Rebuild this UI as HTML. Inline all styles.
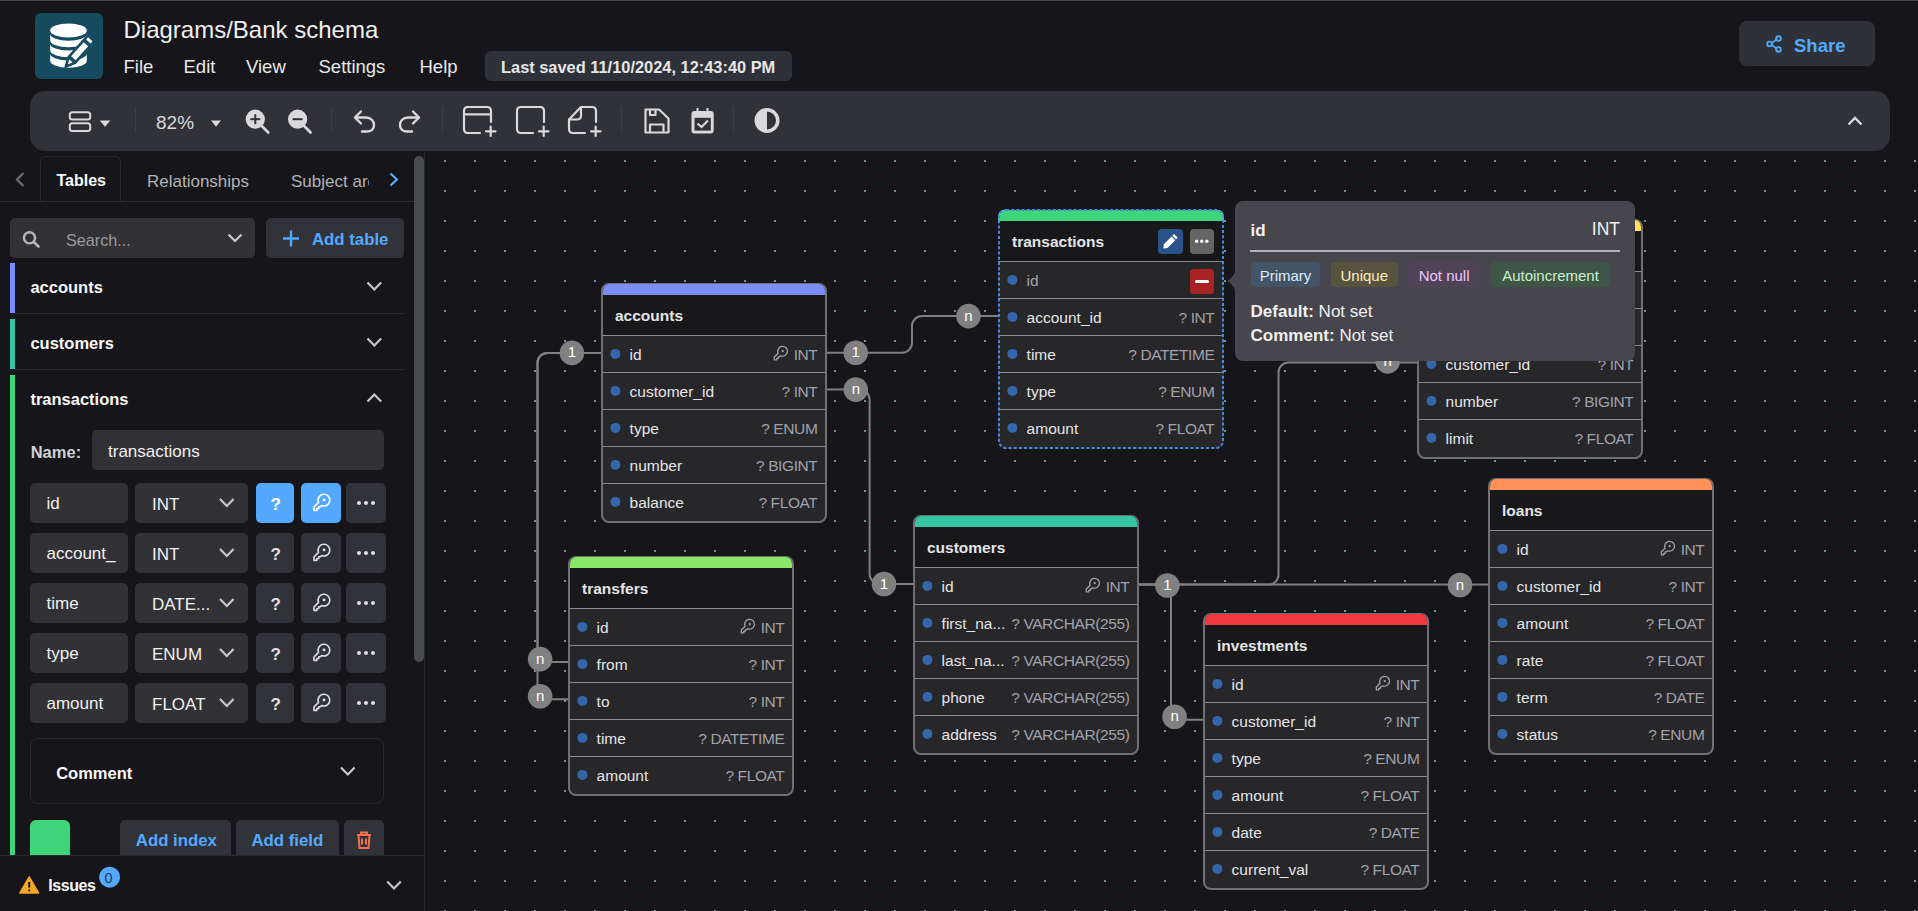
<!DOCTYPE html><html><head><meta charset='utf-8'><style>
*{box-sizing:border-box}
html,body{margin:0;padding:0}
body{width:1918px;height:911px;overflow:hidden;background:#16161a;font-family:"Liberation Sans",sans-serif;position:relative;color:#f9f9f9}
.a{position:absolute}
.t{position:absolute;white-space:nowrap;line-height:1}
svg{display:block}
</style></head><body>
<div class="a" style="left:0px;top:0px;width:1918px;height:1px;background:#4b4b51;border-radius:0px;"></div>
<div class="a" style="left:35px;top:13px;width:68px;height:66px;border-radius:6px;background:#164b60">
<svg width="68" height="66" viewBox="0 0 68 66">
<g fill="#fff">
<ellipse cx="33.5" cy="17.5" rx="18.3" ry="6.9"/>
<path d="M15.2 20.8 A18.3 6.9 0 0 0 51.8 20.8 L51.8 27.4 A18.3 6.9 0 0 1 15.2 27.4 Z"/>
<path d="M15.2 30.7 A18.3 6.9 0 0 0 51.8 30.7 L51.8 37.3 A18.3 6.9 0 0 1 15.2 37.3 Z"/>
<path d="M15.2 40.6 A18.3 6.9 0 0 0 51.8 40.6 L51.8 47.8 A18.3 6.9 0 0 1 15.2 47.8 Z"/>
</g>
<g transform="translate(43.5,39.5) rotate(41.8)" stroke="#164b60" stroke-width="2.6" stroke-linejoin="round">
<rect x="-4.3" y="-19" width="8.6" height="5.6" fill="#fff"/>
<rect x="-4.3" y="-12.5" width="8.6" height="21.5" fill="#fff"/>
<path d="M-4.3 10 L4.3 10 L0 19 Z" fill="#fff"/>
</g>
</svg></div>
<div class="t" style="left:123.5px;top:18.38px;font-size:24px;font-weight:400;color:#f0f0f0;">Diagrams/Bank schema</div>
<div class="t" style="left:123.5px;top:57.84px;font-size:18.5px;font-weight:400;color:#e8e8e8;">File</div>
<div class="t" style="left:183.5px;top:57.84px;font-size:18.5px;font-weight:400;color:#e8e8e8;">Edit</div>
<div class="t" style="left:246.0px;top:57.84px;font-size:18.5px;font-weight:400;color:#e8e8e8;">View</div>
<div class="t" style="left:318.5px;top:57.84px;font-size:18.5px;font-weight:400;color:#e8e8e8;">Settings</div>
<div class="t" style="left:419.5px;top:57.84px;font-size:18.5px;font-weight:400;color:#e8e8e8;">Help</div>
<div class="a" style="left:485px;top:51px;width:307px;height:30px;background:#2e3238;border-radius:6px;"></div>
<div class="t" style="left:501.0px;top:59.12px;font-size:16.4px;font-weight:700;color:#e6e6e6;">Last saved 11/10/2024, 12:43:40 PM</div>
<div class="a" style="left:1739px;top:21px;width:136px;height:45px;background:#2e3238;border-radius:8px;"></div>
<svg class="a" style="left:1765px;top:35px" width="18" height="18" viewBox="0 0 20 20" fill="none" stroke="#54a9ff" stroke-width="2">
<circle cx="15" cy="4" r="2.6"/><circle cx="5" cy="10" r="2.6"/><circle cx="15" cy="16" r="2.6"/><path d="M7.3 8.8 L12.7 5.3 M7.3 11.2 L12.7 14.7"/></svg>
<div class="t" style="left:1794.0px;top:36.84px;font-size:18.5px;font-weight:700;color:#54a9ff;">Share</div>
<div class="a" style="left:30px;top:91px;width:1860px;height:60px;background:#303237;border-radius:15px;"></div>
<svg class="a" style="left:0;top:0;overflow:visible" width="1" height="1" ><rect x="69.8" y="112.2" width="20.4" height="7.4" rx="2.5" fill="none" stroke="#d9d9dc" stroke-width="2"/>
<rect x="69.8" y="123.3" width="20.4" height="7.6" rx="2.5" fill="none" stroke="#d9d9dc" stroke-width="2"/>
<path d="M99.8 120.5 L110.3 120.5 L105 126.8 Z" fill="#d9d9dc"/></svg>
<div class="a" style="left:135px;top:107px;width:1px;height:25px;background:#3b3f45;border-radius:0px;"></div>
<div class="a" style="left:331px;top:107px;width:1px;height:25px;background:#3b3f45;border-radius:0px;"></div>
<div class="a" style="left:442px;top:107px;width:1px;height:25px;background:#3b3f45;border-radius:0px;"></div>
<div class="a" style="left:621px;top:107px;width:1px;height:25px;background:#3b3f45;border-radius:0px;"></div>
<div class="a" style="left:733px;top:107px;width:1px;height:25px;background:#3b3f45;border-radius:0px;"></div>
<div class="t" style="left:156.0px;top:112.82px;font-size:19px;font-weight:400;color:#d9d9dc;">82%</div>
<svg class="a" style="left:0;top:0;overflow:visible" width="1" height="1" ><path d="M211 120.5 L221 120.5 L216 126.8 Z" fill="#d9d9dc"/></svg>
<svg class="a" style="left:0;top:0;overflow:visible" width="1" height="1" ><circle cx="255.3" cy="119.2" r="9.6" fill="#d9d9dc"/><path d="M261.8 126 L268.3 132.5" stroke="#d9d9dc" stroke-width="2.6" stroke-linecap="round"/><path d="M250.3 119.2 L260.3 119.2" stroke="#303237" stroke-width="2"/><path d="M255.3 114.2 L255.3 124.2" stroke="#303237" stroke-width="2"/></svg>
<svg class="a" style="left:0;top:0;overflow:visible" width="1" height="1" ><circle cx="297.6" cy="119.2" r="9.6" fill="#d9d9dc"/><path d="M304.1 126 L310.6 132.5" stroke="#d9d9dc" stroke-width="2.6" stroke-linecap="round"/><path d="M292.6 119.2 L302.6 119.2" stroke="#303237" stroke-width="2"/></svg>
<svg class="a" style="left:0;top:0;overflow:visible" width="1" height="1" ><g fill="none" stroke="#d9d9dc" stroke-width="2.4" stroke-linecap="round" stroke-linejoin="round">
<path d="M361 111.5 L355 117.5 L361 123.5"/><path d="M355.5 117.5 L366 117.5 C371 117.5 374 121 374 125 C374 129 371 131.5 367 131.5 L362 131.5"/>
<path d="M413 111.5 L419 117.5 L413 123.5"/><path d="M418.5 117.5 L408 117.5 C403 117.5 400 121 400 125 C400 129 403 131.5 407 131.5 L412 131.5"/></g></svg>
<svg class="a" style="left:0;top:0;overflow:visible" width="1" height="1" ><g fill="none" stroke="#d9d9dc" stroke-width="2.2" stroke-linecap="round" stroke-linejoin="round">
<path d="M480 133 L468 133 C465.5 133 464 131.5 464 129 L464 111 C464 108.5 465.5 107 468 107 L487 107 C489.5 107 491 108.5 491 111 L491 122"/><path d="M464 114.3 L491 114.3"/><path d="M486 131.3 L495.5 131.3 M490.7 126.5 L490.7 136"/>
<path d="M533 133 L521 133 C518.5 133 517 131.5 517 129 L517 111 C517 108.5 518.5 107 521 107 L540 107 C542.5 107 544 108.5 544 111 L544 122"/><path d="M539 131.3 L548.5 131.3 M543.7 126.5 L543.7 136"/>
<path d="M585 133 L573 133 C570.5 133 569 131.5 569 129 L569 119.5 L581 107 L592 107 C594.5 107 596 108.5 596 111 L596 122"/><path d="M569 119.5 L577 119.5 C579.5 119.5 581 118 581 115.5 L581 107"/><path d="M591 131.3 L600.5 131.3 M595.7 126.5 L595.7 136"/></g></svg>
<svg class="a" style="left:0;top:0;overflow:visible" width="1" height="1" ><g fill="none" stroke="#d9d9dc" stroke-width="2.2" stroke-linejoin="round">
<path d="M645.5 109.5 L659 109.5 L668.5 118.5 L668.5 132.5 L645.5 132.5 Z"/><path d="M650 109.5 L650 115 L655.5 115 L655.5 109.5"/><path d="M650 132.5 L650 124.5 L663.5 124.5 L663.5 132.5"/></g>
<rect x="691.5" y="111" width="22.2" height="22.6" rx="3" fill="#d9d9dc"/><rect x="694.5" y="117.8" width="16.3" height="12.8" fill="#303237"/>
<path d="M697.5 108 L697.5 113 M707.5 108 L707.5 113" stroke="#d9d9dc" stroke-width="2"/>
<path d="M697.5 123.5 L701.5 127 L708 120.5" fill="none" stroke="#d9d9dc" stroke-width="2.2"/>
<circle cx="767" cy="120.5" r="12.5" fill="#d9d9dc"/><path d="M767 111.5 A9 9 0 0 1 767 129.5 Z" fill="#303237"/>
<path d="M1848.5 124.5 L1855 118 L1861.5 124.5" fill="none" stroke="#d9d9dc" stroke-width="2.4"/></svg>
<svg class="a" style="left:0;top:0;overflow:visible" width="1" height="1" ><path d="M23.5 173 L17 179.5 L23.5 186" fill="none" stroke="#6b6b70" stroke-width="2.2"/></svg>
<div class="a" style="left:40px;top:156px;width:81px;height:46px;border:1px solid #2a2a2f;border-bottom:none;border-radius:6px 6px 0 0;background:#16161a"></div>
<div class="a" style="left:0px;top:201px;width:414px;height:1px;background:#2a2a2f;border-radius:0px;"></div>
<div class="t" style="left:56.5px;top:173.46px;font-size:16px;font-weight:700;color:#f9f9f9;">Tables</div>
<div class="t" style="left:147.0px;top:172.61px;font-size:17px;font-weight:400;color:#b2b2b4;">Relationships</div>
<div class="t" style="left:291px;top:172.61px;font-size:17px;color:#b2b2b4;width:78px;overflow:hidden">Subject areas</div>
<svg class="a" style="left:0;top:0;overflow:visible" width="1" height="1" ><path d="M390.5 173.5 L397 179.5 L390.5 185.5" fill="none" stroke="#5fb0ff" stroke-width="2"/></svg>
<div class="a" style="left:10px;top:218px;width:245px;height:40px;background:#323236;border-radius:5px;"></div>
<svg class="a" style="left:0;top:0;overflow:visible" width="1" height="1" ><circle cx="29.5" cy="237.8" r="5.6" fill="none" stroke="#b8b8bc" stroke-width="2.4"/><path d="M33.8 242 L38.5 246.5" stroke="#b8b8bc" stroke-width="2.6" stroke-linecap="round"/></svg>
<div class="t" style="left:66.0px;top:232.29px;font-size:16.2px;font-weight:400;color:#9a9a9e;">Search...</div>
<svg class="a" style="left:0;top:0;overflow:visible" width="1" height="1" ><path d="M228.5 234.5 L235 241 L241.5 234.5" fill="none" stroke="#c8c8cc" stroke-width="2.2"/></svg>
<div class="a" style="left:266px;top:218px;width:138px;height:40px;background:#313338;border-radius:5px;"></div>
<svg class="a" style="left:0;top:0;overflow:visible" width="1" height="1" ><path d="M291 230.5 L291 246.5 M283 238.5 L299 238.5" stroke="#54a9ff" stroke-width="2.4"/></svg>
<div class="t" style="left:312.0px;top:231.78px;font-size:16.8px;font-weight:700;color:#54a9ff;">Add table</div>
<div class="a" style="left:10px;top:263px;width:5px;height:50px;background:#7c8cf8;border-radius:0px;"></div>
<div class="a" style="left:15px;top:313px;width:389px;height:1px;background:#2a2a2f;border-radius:0px;"></div>
<div class="t" style="left:30.4px;top:278.73px;font-size:16.5px;font-weight:700;color:#f9f9f9;">accounts</div>
<svg class="a" style="left:0;top:0;overflow:visible" width="1" height="1" ><path d="M367.5 282.5 L374.3 289.5 L381.1 282.5" fill="none" stroke="#c8c8cc" stroke-width="2.2"/></svg>
<div class="a" style="left:10px;top:319px;width:5px;height:50px;background:#34c6a4;border-radius:0px;"></div>
<div class="a" style="left:15px;top:369px;width:389px;height:1px;background:#2a2a2f;border-radius:0px;"></div>
<div class="t" style="left:30.4px;top:334.73px;font-size:16.5px;font-weight:700;color:#f9f9f9;">customers</div>
<svg class="a" style="left:0;top:0;overflow:visible" width="1" height="1" ><path d="M367.5 338.5 L374.3 345.5 L381.1 338.5" fill="none" stroke="#c8c8cc" stroke-width="2.2"/></svg>
<div class="a" style="left:10px;top:375px;width:5px;height:480px;background:#3ed47a;border-radius:0px;"></div>
<div class="t" style="left:30.4px;top:390.73px;font-size:16.5px;font-weight:700;color:#f9f9f9;">transactions</div>
<svg class="a" style="left:0;top:0;overflow:visible" width="1" height="1" ><path d="M367.5 401.5 L374.3 394.5 L381.1 401.5" fill="none" stroke="#c8c8cc" stroke-width="2.2"/></svg>
<div class="t" style="left:30.7px;top:443.83px;font-size:16.5px;font-weight:700;color:#d0d0d4;">Name:</div>
<div class="a" style="left:92px;top:430px;width:292px;height:40px;background:#323236;border-radius:5px;"></div>
<div class="t" style="left:108.0px;top:443.41px;font-size:17px;font-weight:400;color:#f0f0f0;">transactions</div>
<div class="a" style="left:30px;top:483px;width:98px;height:40px;background:#323236;border-radius:5px;"></div>
<div class="t" style="left:46.5px;top:495.11px;font-size:17px;font-weight:400;color:#f0f0f0;">id</div>
<div class="a" style="left:135px;top:483px;width:113px;height:40px;background:#323236;border-radius:5px;"></div>
<div class="t" style="left:152.0px;top:495.61px;font-size:17px;font-weight:400;color:#f0f0f0;">INT</div>
<svg class="a" style="left:0;top:0;overflow:visible" width="1" height="1" ><path d="M220 499 L226.8 506 L233.6 499" fill="none" stroke="#c8c8cc" stroke-width="2.2"/></svg>
<div class="a" style="left:256px;top:483px;width:38px;height:40px;background:#54a9ff;border-radius:5px;"></div>
<div class="t" style="left:270.5px;top:495.91px;font-size:17px;font-weight:700;color:#ffffff;">?</div>
<div class="a" style="left:301px;top:483px;width:40px;height:40px;background:#54a9ff;border-radius:5px;"></div>
<svg class="a" style="left:0;top:0;overflow:visible" width="1" height="1" ><g transform="translate(313,494.4) scale(1.2)" fill="none" stroke="#ffffff" stroke-width="1.35" stroke-linejoin="round"><path d="M7.2 9.3 A4.9 4.9 0 1 0 4.6 6.7 L0.8 10.5 L0.8 13.3 L3.3 13.3 L3.3 11.8 L4.8 11.8 L4.8 10.3 L6 10.3 Z"/><circle cx="9.2" cy="4.6" r="1.2" fill="#ffffff" stroke="none"/></g></svg>
<div class="a" style="left:346px;top:483px;width:40px;height:40px;background:#313338;border-radius:5px;"></div>
<svg class="a" style="left:0;top:0;overflow:visible" width="1" height="1" ><g fill="#e0e0e4"><circle cx="359" cy="503" r="2"/><circle cx="366" cy="503" r="2"/><circle cx="373" cy="503" r="2"/></g></svg>
<div class="a" style="left:30px;top:533px;width:98px;height:40px;background:#323236;border-radius:5px;"></div>
<div class="t" style="left:46.5px;top:545.11px;font-size:17px;font-weight:400;color:#f0f0f0;">account_</div>
<div class="a" style="left:135px;top:533px;width:113px;height:40px;background:#323236;border-radius:5px;"></div>
<div class="t" style="left:152.0px;top:545.61px;font-size:17px;font-weight:400;color:#f0f0f0;">INT</div>
<svg class="a" style="left:0;top:0;overflow:visible" width="1" height="1" ><path d="M220 549 L226.8 556 L233.6 549" fill="none" stroke="#c8c8cc" stroke-width="2.2"/></svg>
<div class="a" style="left:256px;top:533px;width:38px;height:40px;background:#313338;border-radius:5px;"></div>
<div class="t" style="left:270.5px;top:545.91px;font-size:17px;font-weight:700;color:#e0e0e4;">?</div>
<div class="a" style="left:301px;top:533px;width:40px;height:40px;background:#313338;border-radius:5px;"></div>
<svg class="a" style="left:0;top:0;overflow:visible" width="1" height="1" ><g transform="translate(313,544.4) scale(1.2)" fill="none" stroke="#e0e0e4" stroke-width="1.35" stroke-linejoin="round"><path d="M7.2 9.3 A4.9 4.9 0 1 0 4.6 6.7 L0.8 10.5 L0.8 13.3 L3.3 13.3 L3.3 11.8 L4.8 11.8 L4.8 10.3 L6 10.3 Z"/><circle cx="9.2" cy="4.6" r="1.2" fill="#e0e0e4" stroke="none"/></g></svg>
<div class="a" style="left:346px;top:533px;width:40px;height:40px;background:#313338;border-radius:5px;"></div>
<svg class="a" style="left:0;top:0;overflow:visible" width="1" height="1" ><g fill="#e0e0e4"><circle cx="359" cy="553" r="2"/><circle cx="366" cy="553" r="2"/><circle cx="373" cy="553" r="2"/></g></svg>
<div class="a" style="left:30px;top:583px;width:98px;height:40px;background:#323236;border-radius:5px;"></div>
<div class="t" style="left:46.5px;top:595.11px;font-size:17px;font-weight:400;color:#f0f0f0;">time</div>
<div class="a" style="left:135px;top:583px;width:113px;height:40px;background:#323236;border-radius:5px;"></div>
<div class="t" style="left:152.0px;top:595.61px;font-size:17px;font-weight:400;color:#f0f0f0;">DATE...</div>
<svg class="a" style="left:0;top:0;overflow:visible" width="1" height="1" ><path d="M220 599 L226.8 606 L233.6 599" fill="none" stroke="#c8c8cc" stroke-width="2.2"/></svg>
<div class="a" style="left:256px;top:583px;width:38px;height:40px;background:#313338;border-radius:5px;"></div>
<div class="t" style="left:270.5px;top:595.91px;font-size:17px;font-weight:700;color:#e0e0e4;">?</div>
<div class="a" style="left:301px;top:583px;width:40px;height:40px;background:#313338;border-radius:5px;"></div>
<svg class="a" style="left:0;top:0;overflow:visible" width="1" height="1" ><g transform="translate(313,594.4) scale(1.2)" fill="none" stroke="#e0e0e4" stroke-width="1.35" stroke-linejoin="round"><path d="M7.2 9.3 A4.9 4.9 0 1 0 4.6 6.7 L0.8 10.5 L0.8 13.3 L3.3 13.3 L3.3 11.8 L4.8 11.8 L4.8 10.3 L6 10.3 Z"/><circle cx="9.2" cy="4.6" r="1.2" fill="#e0e0e4" stroke="none"/></g></svg>
<div class="a" style="left:346px;top:583px;width:40px;height:40px;background:#313338;border-radius:5px;"></div>
<svg class="a" style="left:0;top:0;overflow:visible" width="1" height="1" ><g fill="#e0e0e4"><circle cx="359" cy="603" r="2"/><circle cx="366" cy="603" r="2"/><circle cx="373" cy="603" r="2"/></g></svg>
<div class="a" style="left:30px;top:633px;width:98px;height:40px;background:#323236;border-radius:5px;"></div>
<div class="t" style="left:46.5px;top:645.11px;font-size:17px;font-weight:400;color:#f0f0f0;">type</div>
<div class="a" style="left:135px;top:633px;width:113px;height:40px;background:#323236;border-radius:5px;"></div>
<div class="t" style="left:152.0px;top:645.61px;font-size:17px;font-weight:400;color:#f0f0f0;">ENUM</div>
<svg class="a" style="left:0;top:0;overflow:visible" width="1" height="1" ><path d="M220 649 L226.8 656 L233.6 649" fill="none" stroke="#c8c8cc" stroke-width="2.2"/></svg>
<div class="a" style="left:256px;top:633px;width:38px;height:40px;background:#313338;border-radius:5px;"></div>
<div class="t" style="left:270.5px;top:645.91px;font-size:17px;font-weight:700;color:#e0e0e4;">?</div>
<div class="a" style="left:301px;top:633px;width:40px;height:40px;background:#313338;border-radius:5px;"></div>
<svg class="a" style="left:0;top:0;overflow:visible" width="1" height="1" ><g transform="translate(313,644.4) scale(1.2)" fill="none" stroke="#e0e0e4" stroke-width="1.35" stroke-linejoin="round"><path d="M7.2 9.3 A4.9 4.9 0 1 0 4.6 6.7 L0.8 10.5 L0.8 13.3 L3.3 13.3 L3.3 11.8 L4.8 11.8 L4.8 10.3 L6 10.3 Z"/><circle cx="9.2" cy="4.6" r="1.2" fill="#e0e0e4" stroke="none"/></g></svg>
<div class="a" style="left:346px;top:633px;width:40px;height:40px;background:#313338;border-radius:5px;"></div>
<svg class="a" style="left:0;top:0;overflow:visible" width="1" height="1" ><g fill="#e0e0e4"><circle cx="359" cy="653" r="2"/><circle cx="366" cy="653" r="2"/><circle cx="373" cy="653" r="2"/></g></svg>
<div class="a" style="left:30px;top:683px;width:98px;height:40px;background:#323236;border-radius:5px;"></div>
<div class="t" style="left:46.5px;top:695.11px;font-size:17px;font-weight:400;color:#f0f0f0;">amount</div>
<div class="a" style="left:135px;top:683px;width:113px;height:40px;background:#323236;border-radius:5px;"></div>
<div class="t" style="left:152.0px;top:695.61px;font-size:17px;font-weight:400;color:#f0f0f0;">FLOAT</div>
<svg class="a" style="left:0;top:0;overflow:visible" width="1" height="1" ><path d="M220 699 L226.8 706 L233.6 699" fill="none" stroke="#c8c8cc" stroke-width="2.2"/></svg>
<div class="a" style="left:256px;top:683px;width:38px;height:40px;background:#313338;border-radius:5px;"></div>
<div class="t" style="left:270.5px;top:695.91px;font-size:17px;font-weight:700;color:#e0e0e4;">?</div>
<div class="a" style="left:301px;top:683px;width:40px;height:40px;background:#313338;border-radius:5px;"></div>
<svg class="a" style="left:0;top:0;overflow:visible" width="1" height="1" ><g transform="translate(313,694.4) scale(1.2)" fill="none" stroke="#e0e0e4" stroke-width="1.35" stroke-linejoin="round"><path d="M7.2 9.3 A4.9 4.9 0 1 0 4.6 6.7 L0.8 10.5 L0.8 13.3 L3.3 13.3 L3.3 11.8 L4.8 11.8 L4.8 10.3 L6 10.3 Z"/><circle cx="9.2" cy="4.6" r="1.2" fill="#e0e0e4" stroke="none"/></g></svg>
<div class="a" style="left:346px;top:683px;width:40px;height:40px;background:#313338;border-radius:5px;"></div>
<svg class="a" style="left:0;top:0;overflow:visible" width="1" height="1" ><g fill="#e0e0e4"><circle cx="359" cy="703" r="2"/><circle cx="366" cy="703" r="2"/><circle cx="373" cy="703" r="2"/></g></svg>
<div class="a" style="left:30px;top:738px;width:354px;height:66px;border:1px solid #2a2a2f;border-radius:8px"></div>
<div class="t" style="left:56.2px;top:765.03px;font-size:16.5px;font-weight:700;color:#f9f9f9;">Comment</div>
<svg class="a" style="left:0;top:0;overflow:visible" width="1" height="1" ><path d="M341 767.5 L347.8 774.5 L354.6 767.5" fill="none" stroke="#c8c8cc" stroke-width="2.2"/></svg>
<div class="a" style="left:0;top:800px;width:414px;height:55px;overflow:hidden">
<div class="a" style="left:30px;top:20px;width:40px;height:40px;background:#3ed47a;border-radius:6px;"></div>
<div class="a" style="left:120px;top:20px;width:111px;height:40px;background:#313338;border-radius:5px;"></div>
<div class="a" style="left:236px;top:20px;width:103px;height:40px;background:#313338;border-radius:5px;"></div>
<div class="a" style="left:344px;top:20px;width:40px;height:40px;background:#313338;border-radius:5px;"></div>
<div class="t" style="left:135.8px;top:32.58px;font-size:16.8px;font-weight:700;color:#54a9ff;">Add index</div>
<div class="t" style="left:251.5px;top:32.58px;font-size:16.8px;font-weight:700;color:#54a9ff;">Add field</div>
<svg class="a" style="left:0;top:0;overflow:visible" width="1" height="1" ><g fill="none" stroke="#f0704f" stroke-width="2"><path d="M357 35 L371 35 M361 35 L361 32.5 L367 32.5 L367 35"/><path d="M358.5 35 L359.5 48 L368.5 48 L369.5 35"/><path d="M362 38.5 L362 44.5 M366 38.5 L366 44.5"/></g></svg>
</div>
<div class="a" style="left:0px;top:855px;width:424px;height:1px;background:#2a2a2f;border-radius:0px;"></div>
<svg class="a" style="left:0;top:0;overflow:visible" width="1" height="1" ><path d="M29.2 877 L38.5 893 L19.9 893 Z" fill="#f5a623" stroke="#f5a623" stroke-width="1.5" stroke-linejoin="round"/><path d="M29.2 882 L29.2 887.5" stroke="#16161a" stroke-width="2"/><circle cx="29.2" cy="890.3" r="1.1" fill="#16161a"/></svg>
<div class="t" style="left:48.2px;top:878.46px;font-size:16px;font-weight:700;color:#f9f9f9;letter-spacing:-0.4px">Issues</div>
<svg class="a" style="left:0;top:0;overflow:visible" width="1" height="1" ><circle cx="109.6" cy="877.2" r="10.5" fill="#54a9ff"/></svg>
<div class="t" style="left:104.6px;top:871.03px;font-size:14.5px;font-weight:400;color:#1c3a5a;">0</div>
<svg class="a" style="left:0;top:0;overflow:visible" width="1" height="1" ><path d="M387.2 881.5 L394.0 888.5 L400.8 881.5" fill="none" stroke="#c8c8cc" stroke-width="2.2"/></svg>
<div class="a" style="left:414px;top:156px;width:10px;height:506px;background:#484b50;border-radius:5px;"></div>
<div class="a" style="left:424px;top:151px;width:1px;height:760px;background:#26262b;border-radius:0px;"></div>
<svg class="a" style="left:425px;top:151px" width="1493" height="760">
<defs><pattern id="g" x="5" y="-5" width="30" height="30" patternUnits="userSpaceOnUse"><circle cx="15" cy="15" r="1.1" fill="#80b2c0"/></pattern></defs>
<rect x="0" y="5" width="1493" height="755" fill="url(#g)"/></svg>
<svg class="a" style="left:0;top:0;overflow:visible" width="1" height="1" ><path d="M826 352.8 L902 352.8 A10 10 0 0 0 912 342.8 L912 326.1 A10 10 0 0 1 922 316.1 L998 316.1" fill="none" stroke="#808080" stroke-width="2"/><path d="M826 389.6 L859.6 389.6 A10 10 0 0 1 869.6 399.6 L869.6 574 A10 10 0 0 0 879.6 584 L913 584" fill="none" stroke="#808080" stroke-width="2"/><path d="M601 352.9 L547.5 352.9 A10 10 0 0 0 537.5 362.9 L537.5 652 A10 10 0 0 0 547.5 662 L568 662" fill="none" stroke="#808080" stroke-width="2"/><path d="M601 352.9 L547.5 352.9 A10 10 0 0 0 537.5 362.9 L537.5 689.2 A10 10 0 0 0 547.5 699.2 L568 699.2" fill="none" stroke="#808080" stroke-width="2"/><path d="M1139 584.6 L1488 584.6" fill="none" stroke="#808080" stroke-width="2"/><path d="M1139 584.6 L1161 584.6 A10 10 0 0 1 1171 594.6 L1171 709.7 A10 10 0 0 0 1181 719.7 L1203 719.7" fill="none" stroke="#808080" stroke-width="2"/><path d="M1139 584.6 L1268.5 584.6 A10 10 0 0 0 1278.5 574.6 L1278.5 372.6 A10 10 0 0 1 1288.5 362.6 L1417 362.6" fill="none" stroke="#808080" stroke-width="2"/></svg>
<div class="a" style="left:601px;top:283px;width:226px;height:240px;border:2px solid #6f6f76;border-top-width:1px;border-radius:8px;background:#27272a;overflow:hidden">
<div class="a" style="left:0;top:0px;width:100%;height:11px;background:#7c8cf8"></div>
<div class="a" style="left:0;top:11px;width:100%;height:41px;background:#18181b;border-bottom:1px solid #8a8a90"></div>
<div class="a" style="left:0;top:88px;width:100%;height:1px;background:#8a8a90"></div>
<div class="a" style="left:0;top:125px;width:100%;height:1px;background:#8a8a90"></div>
<div class="a" style="left:0;top:162px;width:100%;height:1px;background:#8a8a90"></div>
<div class="a" style="left:0;top:199px;width:100%;height:1px;background:#8a8a90"></div>
</div>
<div class="t" style="left:615.0px;top:308.38px;font-size:15.5px;font-weight:700;color:#e4e4e7;">accounts</div>
<svg class="a" style="left:0;top:0;overflow:visible" width="1" height="1" ><circle cx="615.4" cy="353.9" r="5" fill="#3466ab"/></svg>
<div class="t" style="left:629.6px;top:346.98px;font-size:15.5px;font-weight:400;color:#e4e4e7;">id</div>
<div class="t" style="right:1100.6px;top:346.88px;font-size:15.5px;font-weight:400;color:#a1a1aa;letter-spacing:-0.4px">INT</div>
<svg class="a" style="left:0;top:0;overflow:visible" width="1" height="1" ><circle cx="615.4" cy="390.9" r="5" fill="#3466ab"/></svg>
<div class="t" style="left:629.6px;top:383.98px;font-size:15.5px;font-weight:400;color:#e4e4e7;">customer_id</div>
<div class="t" style="right:1100.6px;top:383.88px;font-size:15.5px;font-weight:400;color:#a1a1aa;letter-spacing:-0.4px">? INT</div>
<svg class="a" style="left:0;top:0;overflow:visible" width="1" height="1" ><circle cx="615.4" cy="427.9" r="5" fill="#3466ab"/></svg>
<div class="t" style="left:629.6px;top:420.98px;font-size:15.5px;font-weight:400;color:#e4e4e7;">type</div>
<div class="t" style="right:1100.6px;top:420.88px;font-size:15.5px;font-weight:400;color:#a1a1aa;letter-spacing:-0.4px">? ENUM</div>
<svg class="a" style="left:0;top:0;overflow:visible" width="1" height="1" ><circle cx="615.4" cy="464.9" r="5" fill="#3466ab"/></svg>
<div class="t" style="left:629.6px;top:457.98px;font-size:15.5px;font-weight:400;color:#e4e4e7;">number</div>
<div class="t" style="right:1100.6px;top:457.88px;font-size:15.5px;font-weight:400;color:#a1a1aa;letter-spacing:-0.4px">? BIGINT</div>
<svg class="a" style="left:0;top:0;overflow:visible" width="1" height="1" ><circle cx="615.4" cy="501.9" r="5" fill="#3466ab"/></svg>
<div class="t" style="left:629.6px;top:494.98px;font-size:15.5px;font-weight:400;color:#e4e4e7;">balance</div>
<div class="t" style="right:1100.6px;top:494.88px;font-size:15.5px;font-weight:400;color:#a1a1aa;letter-spacing:-0.4px">? FLOAT</div>
<div class="a" style="left:1417px;top:219px;width:226px;height:240px;border:2px solid #6f6f76;border-top-width:1px;border-radius:8px;background:#27272a;overflow:hidden">
<div class="a" style="left:0;top:0px;width:100%;height:11px;background:#ffe159"></div>
<div class="a" style="left:0;top:11px;width:100%;height:41px;background:#18181b;border-bottom:1px solid #8a8a90"></div>
<div class="a" style="left:0;top:88px;width:100%;height:1px;background:#8a8a90"></div>
<div class="a" style="left:0;top:125px;width:100%;height:1px;background:#8a8a90"></div>
<div class="a" style="left:0;top:162px;width:100%;height:1px;background:#8a8a90"></div>
<div class="a" style="left:0;top:199px;width:100%;height:1px;background:#8a8a90"></div>
</div>
<div class="t" style="left:1431.0px;top:244.38px;font-size:15.5px;font-weight:700;color:#e4e4e7;">cards</div>
<svg class="a" style="left:0;top:0;overflow:visible" width="1" height="1" ><circle cx="1431.4" cy="289.9" r="5" fill="#3466ab"/></svg>
<div class="t" style="left:1445.6px;top:282.98px;font-size:15.5px;font-weight:400;color:#e4e4e7;">id</div>
<div class="t" style="right:284.6px;top:282.88px;font-size:15.5px;font-weight:400;color:#a1a1aa;letter-spacing:-0.4px">INT</div>
<svg class="a" style="left:0;top:0;overflow:visible" width="1" height="1" ><circle cx="1431.4" cy="326.9" r="5" fill="#3466ab"/></svg>
<div class="t" style="left:1445.6px;top:319.98px;font-size:15.5px;font-weight:400;color:#e4e4e7;">account_id</div>
<div class="t" style="right:284.6px;top:319.88px;font-size:15.5px;font-weight:400;color:#a1a1aa;letter-spacing:-0.4px">? INT</div>
<svg class="a" style="left:0;top:0;overflow:visible" width="1" height="1" ><circle cx="1431.4" cy="363.9" r="5" fill="#3466ab"/></svg>
<div class="t" style="left:1445.6px;top:356.98px;font-size:15.5px;font-weight:400;color:#e4e4e7;">customer_id</div>
<div class="t" style="right:284.6px;top:356.88px;font-size:15.5px;font-weight:400;color:#a1a1aa;letter-spacing:-0.4px">? INT</div>
<svg class="a" style="left:0;top:0;overflow:visible" width="1" height="1" ><circle cx="1431.4" cy="400.9" r="5" fill="#3466ab"/></svg>
<div class="t" style="left:1445.6px;top:393.98px;font-size:15.5px;font-weight:400;color:#e4e4e7;">number</div>
<div class="t" style="right:284.6px;top:393.88px;font-size:15.5px;font-weight:400;color:#a1a1aa;letter-spacing:-0.4px">? BIGINT</div>
<svg class="a" style="left:0;top:0;overflow:visible" width="1" height="1" ><circle cx="1431.4" cy="437.9" r="5" fill="#3466ab"/></svg>
<div class="t" style="left:1445.6px;top:430.98px;font-size:15.5px;font-weight:400;color:#e4e4e7;">limit</div>
<div class="t" style="right:284.6px;top:430.88px;font-size:15.5px;font-weight:400;color:#a1a1aa;letter-spacing:-0.4px">? FLOAT</div>
<div class="a" style="left:998px;top:209px;width:226px;height:240px;border-radius:8px;background:#27272a;overflow:hidden">
<div class="a" style="left:0;top:1px;width:100%;height:11px;background:#3ed47a"></div>
<div class="a" style="left:0;top:12px;width:100%;height:41px;background:#18181b;border-bottom:1px solid #8a8a90"></div>
<div class="a" style="left:0;top:89px;width:100%;height:1px;background:#8a8a90"></div>
<div class="a" style="left:0;top:126px;width:100%;height:1px;background:#8a8a90"></div>
<div class="a" style="left:0;top:163px;width:100%;height:1px;background:#8a8a90"></div>
<div class="a" style="left:0;top:200px;width:100%;height:1px;background:#8a8a90"></div>
</div>
<svg class="a" style="left:0;top:0;overflow:visible" width="1" height="1" ><rect x="999" y="210" width="224" height="238" rx="7" fill="none" stroke="#4a88e0" stroke-width="2" stroke-dasharray="3 2.2"/></svg>
<div class="t" style="left:1012.0px;top:234.38px;font-size:15.5px;font-weight:700;color:#e4e4e7;">transactions</div>
<div class="a" style="left:1158.2px;top:229px;width:24.5px;height:24.5px;background:#2b5389;border-radius:4px;"></div>
<svg class="a" style="left:0;top:0;overflow:visible" width="1" height="1" ><g transform="translate(1170.5,241.3) scale(1.2)"><path d="M-6 6 L-5.5 2.5 L3 -6 L6 -3 L-2.5 5.5 Z" fill="#fff"/><path d="M1.3 -4.3 L4.3 -1.3" stroke="#2b5389" stroke-width="1"/></g></svg>
<div class="a" style="left:1189.5px;top:229px;width:24.5px;height:24.5px;background:#646465;border-radius:4px;"></div>
<svg class="a" style="left:0;top:0;overflow:visible" width="1" height="1" ><g fill="#fff"><circle cx="1196.6" cy="241.3" r="1.7"/><circle cx="1201.7" cy="241.3" r="1.7"/><circle cx="1206.8" cy="241.3" r="1.7"/></g></svg>
<svg class="a" style="left:0;top:0;overflow:visible" width="1" height="1" ><circle cx="1012.4" cy="279.9" r="5" fill="#3466ab"/></svg>
<div class="t" style="left:1026.6px;top:272.98px;font-size:15.5px;font-weight:400;color:#a1a1aa;">id</div>
<div class="a" style="left:1189.5px;top:269px;width:24.5px;height:24.5px;background:#a82424;border-radius:4px;"></div>
<div class="a" style="left:1194.8px;top:280px;width:14px;height:3px;background:#fff;border-radius:1.5px;"></div>
<svg class="a" style="left:0;top:0;overflow:visible" width="1" height="1" ><circle cx="1012.4" cy="316.9" r="5" fill="#3466ab"/></svg>
<div class="t" style="left:1026.6px;top:309.98px;font-size:15.5px;font-weight:400;color:#e4e4e7;">account_id</div>
<div class="t" style="right:703.6px;top:309.88px;font-size:15.5px;font-weight:400;color:#a1a1aa;letter-spacing:-0.4px">? INT</div>
<svg class="a" style="left:0;top:0;overflow:visible" width="1" height="1" ><circle cx="1012.4" cy="353.9" r="5" fill="#3466ab"/></svg>
<div class="t" style="left:1026.6px;top:346.98px;font-size:15.5px;font-weight:400;color:#e4e4e7;">time</div>
<div class="t" style="right:703.6px;top:346.88px;font-size:15.5px;font-weight:400;color:#a1a1aa;letter-spacing:-0.4px">? DATETIME</div>
<svg class="a" style="left:0;top:0;overflow:visible" width="1" height="1" ><circle cx="1012.4" cy="390.9" r="5" fill="#3466ab"/></svg>
<div class="t" style="left:1026.6px;top:383.98px;font-size:15.5px;font-weight:400;color:#e4e4e7;">type</div>
<div class="t" style="right:703.6px;top:383.88px;font-size:15.5px;font-weight:400;color:#a1a1aa;letter-spacing:-0.4px">? ENUM</div>
<svg class="a" style="left:0;top:0;overflow:visible" width="1" height="1" ><circle cx="1012.4" cy="427.9" r="5" fill="#3466ab"/></svg>
<div class="t" style="left:1026.6px;top:420.98px;font-size:15.5px;font-weight:400;color:#e4e4e7;">amount</div>
<div class="t" style="right:703.6px;top:420.88px;font-size:15.5px;font-weight:400;color:#a1a1aa;letter-spacing:-0.4px">? FLOAT</div>
<div class="a" style="left:568px;top:556px;width:226px;height:240px;border:2px solid #6f6f76;border-top-width:1px;border-radius:8px;background:#27272a;overflow:hidden">
<div class="a" style="left:0;top:0px;width:100%;height:11px;background:#89e667"></div>
<div class="a" style="left:0;top:11px;width:100%;height:41px;background:#18181b;border-bottom:1px solid #8a8a90"></div>
<div class="a" style="left:0;top:88px;width:100%;height:1px;background:#8a8a90"></div>
<div class="a" style="left:0;top:125px;width:100%;height:1px;background:#8a8a90"></div>
<div class="a" style="left:0;top:162px;width:100%;height:1px;background:#8a8a90"></div>
<div class="a" style="left:0;top:199px;width:100%;height:1px;background:#8a8a90"></div>
</div>
<div class="t" style="left:582.0px;top:581.38px;font-size:15.5px;font-weight:700;color:#e4e4e7;">transfers</div>
<svg class="a" style="left:0;top:0;overflow:visible" width="1" height="1" ><circle cx="582.4" cy="626.9" r="5" fill="#3466ab"/></svg>
<div class="t" style="left:596.6px;top:619.98px;font-size:15.5px;font-weight:400;color:#e4e4e7;">id</div>
<div class="t" style="right:1133.6px;top:619.88px;font-size:15.5px;font-weight:400;color:#a1a1aa;letter-spacing:-0.4px">INT</div>
<svg class="a" style="left:0;top:0;overflow:visible" width="1" height="1" ><circle cx="582.4" cy="663.9" r="5" fill="#3466ab"/></svg>
<div class="t" style="left:596.6px;top:656.98px;font-size:15.5px;font-weight:400;color:#e4e4e7;">from</div>
<div class="t" style="right:1133.6px;top:656.88px;font-size:15.5px;font-weight:400;color:#a1a1aa;letter-spacing:-0.4px">? INT</div>
<svg class="a" style="left:0;top:0;overflow:visible" width="1" height="1" ><circle cx="582.4" cy="700.9" r="5" fill="#3466ab"/></svg>
<div class="t" style="left:596.6px;top:693.98px;font-size:15.5px;font-weight:400;color:#e4e4e7;">to</div>
<div class="t" style="right:1133.6px;top:693.88px;font-size:15.5px;font-weight:400;color:#a1a1aa;letter-spacing:-0.4px">? INT</div>
<svg class="a" style="left:0;top:0;overflow:visible" width="1" height="1" ><circle cx="582.4" cy="737.9" r="5" fill="#3466ab"/></svg>
<div class="t" style="left:596.6px;top:730.98px;font-size:15.5px;font-weight:400;color:#e4e4e7;">time</div>
<div class="t" style="right:1133.6px;top:730.88px;font-size:15.5px;font-weight:400;color:#a1a1aa;letter-spacing:-0.4px">? DATETIME</div>
<svg class="a" style="left:0;top:0;overflow:visible" width="1" height="1" ><circle cx="582.4" cy="774.9" r="5" fill="#3466ab"/></svg>
<div class="t" style="left:596.6px;top:767.98px;font-size:15.5px;font-weight:400;color:#e4e4e7;">amount</div>
<div class="t" style="right:1133.6px;top:767.88px;font-size:15.5px;font-weight:400;color:#a1a1aa;letter-spacing:-0.4px">? FLOAT</div>
<div class="a" style="left:913px;top:515px;width:226px;height:240px;border:2px solid #6f6f76;border-top-width:1px;border-radius:8px;background:#27272a;overflow:hidden">
<div class="a" style="left:0;top:0px;width:100%;height:11px;background:#34c6a4"></div>
<div class="a" style="left:0;top:11px;width:100%;height:41px;background:#18181b;border-bottom:1px solid #8a8a90"></div>
<div class="a" style="left:0;top:88px;width:100%;height:1px;background:#8a8a90"></div>
<div class="a" style="left:0;top:125px;width:100%;height:1px;background:#8a8a90"></div>
<div class="a" style="left:0;top:162px;width:100%;height:1px;background:#8a8a90"></div>
<div class="a" style="left:0;top:199px;width:100%;height:1px;background:#8a8a90"></div>
</div>
<div class="t" style="left:927.0px;top:540.38px;font-size:15.5px;font-weight:700;color:#e4e4e7;">customers</div>
<svg class="a" style="left:0;top:0;overflow:visible" width="1" height="1" ><circle cx="927.4" cy="585.9" r="5" fill="#3466ab"/></svg>
<div class="t" style="left:941.6px;top:578.98px;font-size:15.5px;font-weight:400;color:#e4e4e7;">id</div>
<div class="t" style="right:788.6px;top:578.88px;font-size:15.5px;font-weight:400;color:#a1a1aa;letter-spacing:-0.4px">INT</div>
<svg class="a" style="left:0;top:0;overflow:visible" width="1" height="1" ><circle cx="927.4" cy="622.9" r="5" fill="#3466ab"/></svg>
<div class="t" style="left:941.6px;top:615.98px;font-size:15.5px;font-weight:400;color:#e4e4e7;">first_na...</div>
<div class="t" style="right:788.6px;top:615.88px;font-size:15.5px;font-weight:400;color:#a1a1aa;letter-spacing:-0.4px">? VARCHAR(255)</div>
<svg class="a" style="left:0;top:0;overflow:visible" width="1" height="1" ><circle cx="927.4" cy="659.9" r="5" fill="#3466ab"/></svg>
<div class="t" style="left:941.6px;top:652.98px;font-size:15.5px;font-weight:400;color:#e4e4e7;">last_na...</div>
<div class="t" style="right:788.6px;top:652.88px;font-size:15.5px;font-weight:400;color:#a1a1aa;letter-spacing:-0.4px">? VARCHAR(255)</div>
<svg class="a" style="left:0;top:0;overflow:visible" width="1" height="1" ><circle cx="927.4" cy="696.9" r="5" fill="#3466ab"/></svg>
<div class="t" style="left:941.6px;top:689.98px;font-size:15.5px;font-weight:400;color:#e4e4e7;">phone</div>
<div class="t" style="right:788.6px;top:689.88px;font-size:15.5px;font-weight:400;color:#a1a1aa;letter-spacing:-0.4px">? VARCHAR(255)</div>
<svg class="a" style="left:0;top:0;overflow:visible" width="1" height="1" ><circle cx="927.4" cy="733.9" r="5" fill="#3466ab"/></svg>
<div class="t" style="left:941.6px;top:726.98px;font-size:15.5px;font-weight:400;color:#e4e4e7;">address</div>
<div class="t" style="right:788.6px;top:726.88px;font-size:15.5px;font-weight:400;color:#a1a1aa;letter-spacing:-0.4px">? VARCHAR(255)</div>
<div class="a" style="left:1203px;top:613px;width:226px;height:277px;border:2px solid #6f6f76;border-top-width:1px;border-radius:8px;background:#27272a;overflow:hidden">
<div class="a" style="left:0;top:0px;width:100%;height:11px;background:#ef3b3f"></div>
<div class="a" style="left:0;top:11px;width:100%;height:41px;background:#18181b;border-bottom:1px solid #8a8a90"></div>
<div class="a" style="left:0;top:88px;width:100%;height:1px;background:#8a8a90"></div>
<div class="a" style="left:0;top:125px;width:100%;height:1px;background:#8a8a90"></div>
<div class="a" style="left:0;top:162px;width:100%;height:1px;background:#8a8a90"></div>
<div class="a" style="left:0;top:199px;width:100%;height:1px;background:#8a8a90"></div>
<div class="a" style="left:0;top:236px;width:100%;height:1px;background:#8a8a90"></div>
</div>
<div class="t" style="left:1217.0px;top:638.38px;font-size:15.5px;font-weight:700;color:#e4e4e7;">investments</div>
<svg class="a" style="left:0;top:0;overflow:visible" width="1" height="1" ><circle cx="1217.4" cy="683.9" r="5" fill="#3466ab"/></svg>
<div class="t" style="left:1231.6px;top:676.98px;font-size:15.5px;font-weight:400;color:#e4e4e7;">id</div>
<div class="t" style="right:498.6px;top:676.88px;font-size:15.5px;font-weight:400;color:#a1a1aa;letter-spacing:-0.4px">INT</div>
<svg class="a" style="left:0;top:0;overflow:visible" width="1" height="1" ><circle cx="1217.4" cy="720.9" r="5" fill="#3466ab"/></svg>
<div class="t" style="left:1231.6px;top:713.98px;font-size:15.5px;font-weight:400;color:#e4e4e7;">customer_id</div>
<div class="t" style="right:498.6px;top:713.88px;font-size:15.5px;font-weight:400;color:#a1a1aa;letter-spacing:-0.4px">? INT</div>
<svg class="a" style="left:0;top:0;overflow:visible" width="1" height="1" ><circle cx="1217.4" cy="757.9" r="5" fill="#3466ab"/></svg>
<div class="t" style="left:1231.6px;top:750.98px;font-size:15.5px;font-weight:400;color:#e4e4e7;">type</div>
<div class="t" style="right:498.6px;top:750.88px;font-size:15.5px;font-weight:400;color:#a1a1aa;letter-spacing:-0.4px">? ENUM</div>
<svg class="a" style="left:0;top:0;overflow:visible" width="1" height="1" ><circle cx="1217.4" cy="794.9" r="5" fill="#3466ab"/></svg>
<div class="t" style="left:1231.6px;top:787.98px;font-size:15.5px;font-weight:400;color:#e4e4e7;">amount</div>
<div class="t" style="right:498.6px;top:787.88px;font-size:15.5px;font-weight:400;color:#a1a1aa;letter-spacing:-0.4px">? FLOAT</div>
<svg class="a" style="left:0;top:0;overflow:visible" width="1" height="1" ><circle cx="1217.4" cy="831.9" r="5" fill="#3466ab"/></svg>
<div class="t" style="left:1231.6px;top:824.98px;font-size:15.5px;font-weight:400;color:#e4e4e7;">date</div>
<div class="t" style="right:498.6px;top:824.88px;font-size:15.5px;font-weight:400;color:#a1a1aa;letter-spacing:-0.4px">? DATE</div>
<svg class="a" style="left:0;top:0;overflow:visible" width="1" height="1" ><circle cx="1217.4" cy="868.9" r="5" fill="#3466ab"/></svg>
<div class="t" style="left:1231.6px;top:861.98px;font-size:15.5px;font-weight:400;color:#e4e4e7;">current_val</div>
<div class="t" style="right:498.6px;top:861.88px;font-size:15.5px;font-weight:400;color:#a1a1aa;letter-spacing:-0.4px">? FLOAT</div>
<div class="a" style="left:1488px;top:478px;width:226px;height:277px;border:2px solid #6f6f76;border-top-width:1px;border-radius:8px;background:#27272a;overflow:hidden">
<div class="a" style="left:0;top:0px;width:100%;height:11px;background:#ff9159"></div>
<div class="a" style="left:0;top:11px;width:100%;height:41px;background:#18181b;border-bottom:1px solid #8a8a90"></div>
<div class="a" style="left:0;top:88px;width:100%;height:1px;background:#8a8a90"></div>
<div class="a" style="left:0;top:125px;width:100%;height:1px;background:#8a8a90"></div>
<div class="a" style="left:0;top:162px;width:100%;height:1px;background:#8a8a90"></div>
<div class="a" style="left:0;top:199px;width:100%;height:1px;background:#8a8a90"></div>
<div class="a" style="left:0;top:236px;width:100%;height:1px;background:#8a8a90"></div>
</div>
<div class="t" style="left:1502.0px;top:503.38px;font-size:15.5px;font-weight:700;color:#e4e4e7;">loans</div>
<svg class="a" style="left:0;top:0;overflow:visible" width="1" height="1" ><circle cx="1502.4" cy="548.9" r="5" fill="#3466ab"/></svg>
<div class="t" style="left:1516.6px;top:541.98px;font-size:15.5px;font-weight:400;color:#e4e4e7;">id</div>
<div class="t" style="right:213.6px;top:541.88px;font-size:15.5px;font-weight:400;color:#a1a1aa;letter-spacing:-0.4px">INT</div>
<svg class="a" style="left:0;top:0;overflow:visible" width="1" height="1" ><circle cx="1502.4" cy="585.9" r="5" fill="#3466ab"/></svg>
<div class="t" style="left:1516.6px;top:578.98px;font-size:15.5px;font-weight:400;color:#e4e4e7;">customer_id</div>
<div class="t" style="right:213.6px;top:578.88px;font-size:15.5px;font-weight:400;color:#a1a1aa;letter-spacing:-0.4px">? INT</div>
<svg class="a" style="left:0;top:0;overflow:visible" width="1" height="1" ><circle cx="1502.4" cy="622.9" r="5" fill="#3466ab"/></svg>
<div class="t" style="left:1516.6px;top:615.98px;font-size:15.5px;font-weight:400;color:#e4e4e7;">amount</div>
<div class="t" style="right:213.6px;top:615.88px;font-size:15.5px;font-weight:400;color:#a1a1aa;letter-spacing:-0.4px">? FLOAT</div>
<svg class="a" style="left:0;top:0;overflow:visible" width="1" height="1" ><circle cx="1502.4" cy="659.9" r="5" fill="#3466ab"/></svg>
<div class="t" style="left:1516.6px;top:652.98px;font-size:15.5px;font-weight:400;color:#e4e4e7;">rate</div>
<div class="t" style="right:213.6px;top:652.88px;font-size:15.5px;font-weight:400;color:#a1a1aa;letter-spacing:-0.4px">? FLOAT</div>
<svg class="a" style="left:0;top:0;overflow:visible" width="1" height="1" ><circle cx="1502.4" cy="696.9" r="5" fill="#3466ab"/></svg>
<div class="t" style="left:1516.6px;top:689.98px;font-size:15.5px;font-weight:400;color:#e4e4e7;">term</div>
<div class="t" style="right:213.6px;top:689.88px;font-size:15.5px;font-weight:400;color:#a1a1aa;letter-spacing:-0.4px">? DATE</div>
<svg class="a" style="left:0;top:0;overflow:visible" width="1" height="1" ><circle cx="1502.4" cy="733.9" r="5" fill="#3466ab"/></svg>
<div class="t" style="left:1516.6px;top:726.98px;font-size:15.5px;font-weight:400;color:#e4e4e7;">status</div>
<div class="t" style="right:213.6px;top:726.88px;font-size:15.5px;font-weight:400;color:#a1a1aa;letter-spacing:-0.4px">? ENUM</div>
<svg class="a" style="left:0;top:0;overflow:visible" width="1" height="1" ><g transform="translate(773.5,346.5)" fill="none" stroke="#a1a1aa" stroke-width="1.3" stroke-linejoin="round"><path d="M7.2 9.3 A4.9 4.9 0 1 0 4.6 6.7 L0.8 10.5 L0.8 13.3 L3.3 13.3 L3.3 11.8 L4.8 11.8 L4.8 10.3 L6 10.3 Z"/><circle cx="9.2" cy="4.6" r="1.2" fill="#a1a1aa" stroke="none"/></g></svg>
<svg class="a" style="left:0;top:0;overflow:visible" width="1" height="1" ><g transform="translate(740.5,619.5)" fill="none" stroke="#a1a1aa" stroke-width="1.3" stroke-linejoin="round"><path d="M7.2 9.3 A4.9 4.9 0 1 0 4.6 6.7 L0.8 10.5 L0.8 13.3 L3.3 13.3 L3.3 11.8 L4.8 11.8 L4.8 10.3 L6 10.3 Z"/><circle cx="9.2" cy="4.6" r="1.2" fill="#a1a1aa" stroke="none"/></g></svg>
<svg class="a" style="left:0;top:0;overflow:visible" width="1" height="1" ><g transform="translate(1085.5,578.5)" fill="none" stroke="#a1a1aa" stroke-width="1.3" stroke-linejoin="round"><path d="M7.2 9.3 A4.9 4.9 0 1 0 4.6 6.7 L0.8 10.5 L0.8 13.3 L3.3 13.3 L3.3 11.8 L4.8 11.8 L4.8 10.3 L6 10.3 Z"/><circle cx="9.2" cy="4.6" r="1.2" fill="#a1a1aa" stroke="none"/></g></svg>
<svg class="a" style="left:0;top:0;overflow:visible" width="1" height="1" ><g transform="translate(1375.5,676.5)" fill="none" stroke="#a1a1aa" stroke-width="1.3" stroke-linejoin="round"><path d="M7.2 9.3 A4.9 4.9 0 1 0 4.6 6.7 L0.8 10.5 L0.8 13.3 L3.3 13.3 L3.3 11.8 L4.8 11.8 L4.8 10.3 L6 10.3 Z"/><circle cx="9.2" cy="4.6" r="1.2" fill="#a1a1aa" stroke="none"/></g></svg>
<svg class="a" style="left:0;top:0;overflow:visible" width="1" height="1" ><g transform="translate(1660.5,541.5)" fill="none" stroke="#a1a1aa" stroke-width="1.3" stroke-linejoin="round"><path d="M7.2 9.3 A4.9 4.9 0 1 0 4.6 6.7 L0.8 10.5 L0.8 13.3 L3.3 13.3 L3.3 11.8 L4.8 11.8 L4.8 10.3 L6 10.3 Z"/><circle cx="9.2" cy="4.6" r="1.2" fill="#a1a1aa" stroke="none"/></g></svg>
<svg class="a" style="left:0;top:0;overflow:visible" width="1" height="1" ><circle cx="855.7" cy="352.8" r="12.3" fill="#808080"/></svg>
<div class="t" style="left:843.7px;top:344.3px;width:24px;text-align:center;font-size:15px;color:#fff">1</div>
<svg class="a" style="left:0;top:0;overflow:visible" width="1" height="1" ><circle cx="968.5" cy="316.1" r="12.3" fill="#808080"/></svg>
<div class="t" style="left:956.5px;top:307.6px;width:24px;text-align:center;font-size:15px;color:#fff">n</div>
<svg class="a" style="left:0;top:0;overflow:visible" width="1" height="1" ><circle cx="855.8" cy="389.6" r="12.3" fill="#808080"/></svg>
<div class="t" style="left:843.8px;top:381.1px;width:24px;text-align:center;font-size:15px;color:#fff">n</div>
<svg class="a" style="left:0;top:0;overflow:visible" width="1" height="1" ><circle cx="884" cy="584" r="12.3" fill="#808080"/></svg>
<div class="t" style="left:872px;top:575.5px;width:24px;text-align:center;font-size:15px;color:#fff">1</div>
<svg class="a" style="left:0;top:0;overflow:visible" width="1" height="1" ><circle cx="571.9" cy="352.9" r="12.3" fill="#808080"/></svg>
<div class="t" style="left:559.9px;top:344.4px;width:24px;text-align:center;font-size:15px;color:#fff">1</div>
<svg class="a" style="left:0;top:0;overflow:visible" width="1" height="1" ><circle cx="540.1" cy="659.1" r="12.3" fill="#808080"/></svg>
<div class="t" style="left:528.1px;top:650.6px;width:24px;text-align:center;font-size:15px;color:#fff">n</div>
<svg class="a" style="left:0;top:0;overflow:visible" width="1" height="1" ><circle cx="540.1" cy="696.2" r="12.3" fill="#808080"/></svg>
<div class="t" style="left:528.1px;top:687.7px;width:24px;text-align:center;font-size:15px;color:#fff">n</div>
<svg class="a" style="left:0;top:0;overflow:visible" width="1" height="1" ><circle cx="1167.3" cy="585.5" r="12.3" fill="#808080"/></svg>
<div class="t" style="left:1155.3px;top:577.0px;width:24px;text-align:center;font-size:15px;color:#fff">1</div>
<svg class="a" style="left:0;top:0;overflow:visible" width="1" height="1" ><circle cx="1460" cy="585" r="12.3" fill="#808080"/></svg>
<div class="t" style="left:1448px;top:576.5px;width:24px;text-align:center;font-size:15px;color:#fff">n</div>
<svg class="a" style="left:0;top:0;overflow:visible" width="1" height="1" ><circle cx="1174.6" cy="716.8" r="12.3" fill="#808080"/></svg>
<div class="t" style="left:1162.6px;top:708.3px;width:24px;text-align:center;font-size:15px;color:#fff">n</div>
<svg class="a" style="left:0;top:0;overflow:visible" width="1" height="1" ><circle cx="1387.7" cy="361.4" r="12.3" fill="#808080"/></svg>
<div class="t" style="left:1375.7px;top:352.9px;width:24px;text-align:center;font-size:15px;color:#fff">n</div>
<div class="a" style="left:1235px;top:201px;width:400px;height:160px;border-radius:8px;background:#46464c"></div>
<svg class="a" style="left:0;top:0;overflow:visible" width="1" height="1" ><path d="M1236 264 C1236 272 1234 277 1227 281 C1234 285 1236 290 1236 298 Z" fill="#46464c"/></svg>
<div class="t" style="left:1250.6px;top:221.61px;font-size:17px;font-weight:700;color:#f0f0f2;">id</div>
<div class="t" style="right:298.0px;top:220.99px;font-size:17.5px;font-weight:400;color:#f0f0f2;">INT</div>
<div class="a" style="left:1250px;top:250px;width:370px;height:2px;background:#b4b4b8;border-radius:0px;"></div>
<div class="a" style="left:1251px;top:262px;width:69px;height:25px;background:#445468;border-radius:4px;"></div>
<div class="t" style="left:1251px;top:268.30px;width:69.0px;text-align:center;font-size:15px;color:#dcebfa">Primary</div>
<div class="a" style="left:1330.5px;top:262px;width:67.5px;height:25px;background:#58533f;border-radius:4px;"></div>
<div class="t" style="left:1330.5px;top:268.30px;width:67.5px;text-align:center;font-size:15px;color:#fff0be">Unique</div>
<div class="a" style="left:1407.7px;top:262px;width:72.8px;height:25px;background:#4f4358;border-radius:4px;"></div>
<div class="t" style="left:1407.7px;top:268.30px;width:72.8px;text-align:center;font-size:15px;color:#ecc8fa">Not null</div>
<div class="a" style="left:1490.7px;top:262px;width:119.6px;height:25px;background:#3f5547;border-radius:4px;"></div>
<div class="t" style="left:1490.7px;top:268.30px;width:119.6px;text-align:center;font-size:15px;color:#c8f0cd">Autoincrement</div>
<div class="t" style="left:1250.6px;top:302.61px;font-size:17px;font-weight:400;color:#f0f0f2;"><b>Default:</b> Not set</div>
<div class="t" style="left:1250.6px;top:327.41px;font-size:17px;font-weight:400;color:#f0f0f2;"><b>Comment:</b> Not set</div>
</body></html>
